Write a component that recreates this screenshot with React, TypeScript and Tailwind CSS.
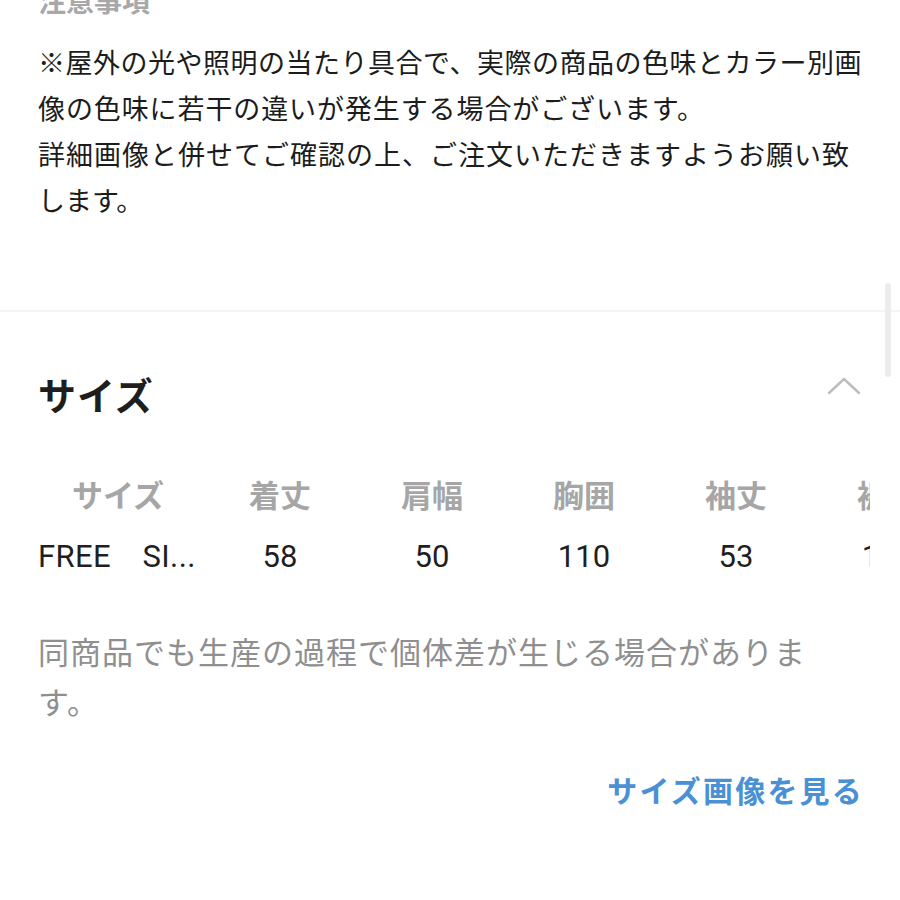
import React from "react"

const headers = ["着丈", "肩幅", "胸囲", "袖丈", "裾幅"]
const values = ["58", "50", "110", "53", "104"]

function ChevronUp() {
  return (
    <svg width="34" height="18" viewBox="0 0 34 18" fill="none">
      <polyline points="2,16 17,2 32,16" stroke="#bdbdbd" strokeWidth="2.4" strokeLinecap="round" strokeLinejoin="round" />
    </svg>
  )
}

export default function App() {
  return (
    <div className="relative w-[900px] h-[900px] overflow-hidden bg-white font-['Noto_Sans_CJK_JP',sans-serif]">
      {/* scroll indicator */}
      <div className="absolute left-[885px] top-[283px] w-[6px] h-[94px] rounded-full bg-[#ececec]" />

      <div className="pl-[38px] pr-[30px]">
        <div className="-mt-[17px] h-[34px] text-[28px] leading-[34px] font-bold text-[#a8a8a8]">注意事項</div>

        <div className="mt-[22px] text-[27px] leading-[46px] text-[#1c1c1c] whitespace-nowrap">
          <div className="tracking-[0.5px]">※屋外の光や照明の当たり具合で、実際の商品の色味とカラー別画</div>
          <div className="tracking-[0.9px]">像の色味に若干の違いが発生する場合がございます。</div>
          <div className="tracking-[1px]">詳細画像と併せてご確認の上、ご注文いただきますようお願い致</div>
          <div>します。</div>
        </div>
      </div>

      <div className="mt-[87px] h-[2px] bg-[#f4f4f4]" />

      <div className="pl-[38px] pr-[30px]">
        <div className="mt-[58px] flex items-center justify-between h-[48px]">
          <h2 className="text-[38px] leading-[48px] font-bold tracking-[1px] text-[#1e1e1e]">サイズ</h2>
          <div className="mr-[9px] mt-[-16px]">
            <ChevronUp />
          </div>
        </div>

        <div className="mt-[54px] w-[832px] overflow-hidden">
          <div className="flex h-[44px] items-center text-[31px] leading-[44px] font-bold text-[#a6a6a6] whitespace-nowrap">
            <div className="w-[166px] shrink-0">
              <div className="w-[160px] text-center">サイズ</div>
            </div>
            {headers.map((h) => (
              <div key={h} className="w-[152px] shrink-0 text-center">
                {h}
              </div>
            ))}
          </div>
          <div className="mt-[19px] flex h-[44px] items-center text-[31px] leading-[44px] text-[#1f1f1f] whitespace-nowrap font-['Roboto','Noto_Sans_CJK_JP',sans-serif]">
            <div className="w-[166px] shrink-0 tracking-[0.4px]">FREE　SI...</div>
            {values.map((v, i) => (
              <div key={i} className="w-[152px] shrink-0 text-center">
                {v}
              </div>
            ))}
          </div>
        </div>

        <div className="mt-[47px] text-[31px] leading-[50px] tracking-[1px] text-[#8f8f8f] whitespace-nowrap">
          <div>同商品でも生産の過程で個体差が生じる場合がありま</div>
          <div>す。</div>
        </div>

        <div className="mt-[41px] h-[44px] text-right text-[30px] leading-[44px] font-bold tracking-[2.2px] text-[#4a90d4]">
          <span className="mr-[6px]">サイズ画像を見る</span>
        </div>
      </div>
    </div>
  )
}
